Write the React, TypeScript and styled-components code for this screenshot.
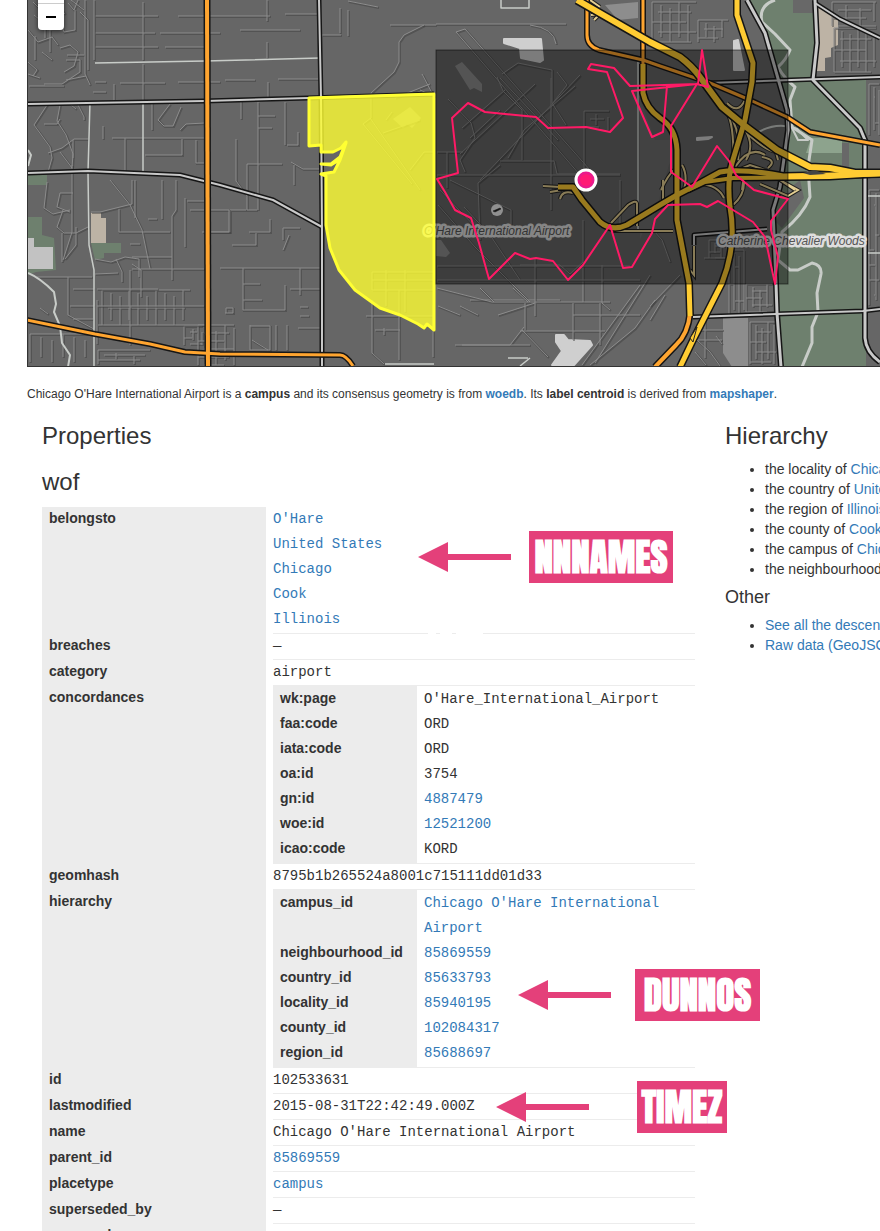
import React from "react";
import styled, { createGlobalStyle } from "styled-components";

const SANS = `"Helvetica Neue", Helvetica, "Liberation Sans", Arial, sans-serif`;

const GlobalStyle = createGlobalStyle`
  * { box-sizing: border-box; }
  body {
    margin: 0;
    background: #fff;
    color: #333;
    font-family: ${SANS};
    font-size: 14px;
    line-height: 20px;
  }
`;

const LINK = "#337ab7";
const PINK = "#e4407a";

const Page = styled.div`
  height: 100vh;
  overflow: hidden;
  padding-left: 27px;
`;

const MapFrame = styled.section`
  position: relative;
  height: 367px;
  overflow: hidden;
  background: #666;
  border: solid #333;
  border-width: 0 0 1px 1px;
`;

const MapDrawing = styled.svg`
  display: block;
  width: 100%;
  height: 100%;
`;

const ZoomControl = styled.div`
  position: absolute;
  top: -23px;
  left: 10px;
  display: flex;
  flex-direction: column;
  border-radius: 4px;
  box-shadow: 0 1px 5px rgba(0, 0, 0, 0.65);
`;

const ZoomButton = styled.button<{ $last?: boolean }>`
  display: flex;
  align-items: center;
  justify-content: center;
  width: 26px;
  height: ${(p) => (p.$last ? 26 : 27)}px;
  padding: 0;
  border: 0;
  border-bottom: ${(p) => (p.$last ? "0" : "1px solid #ccc")};
  border-radius: ${(p) => (p.$last ? "0 0 4px 4px" : "4px 4px 0 0")};
  background: #fff;
`;

const Caption = styled.p`
  margin: 17px 0 19px;
  font-size: 12px;
`;

const Link = styled.a`
  color: ${LINK};
  text-decoration: none;
`;

const Columns = styled.div`
  display: grid;
  grid-template-columns: minmax(0, 1fr) 155px;
  column-gap: 30px;
  padding-left: 15px;
`;

const Title = styled.h3`
  margin: 0 0 20px;
  font-size: 24px;
  font-weight: 400;
  line-height: 26px;
`;

const GroupTitle = styled(Title)`
  margin-bottom: 12px;
`;

const SideTitle = styled(Title)`
  margin-bottom: 10px;
`;

const SideSubtitle = styled.h4`
  margin: 8px 0;
  font-size: 18px;
  font-weight: 400;
  line-height: 20px;
`;

const SideList = styled.ul`
  margin: 0;
  padding-left: 40px;
  white-space: nowrap;
`;

const Records = styled.div`
  position: relative;
`;

const PropertyTable = styled.table`
  width: 100%;
  table-layout: fixed;
  border-collapse: collapse;
  line-height: 25px;
`;

const Key = styled.th<{ $width: number }>`
  width: ${(p) => p.$width}px;
  padding: 0 7px;
  background: #ececec;
  font-family: ${SANS};
  line-height: 23px;
  text-align: left;
  vertical-align: top;
`;

const Value = styled.td`
  padding: 0 0 0 7px;
  vertical-align: top;
  font-family: "Courier New", "Liberation Mono", monospace;
`;

const Ruled = styled.div`
  border-bottom: 1px solid #ececec;
`;

const ValueList = styled.ul`
  margin: 0;
  padding: 0;
  list-style: none;

  &:has(li + li) {
    padding-bottom: 1px;
  }
`;

const NestedFrame = styled.div`
  display: flex;
  padding: 1px 0;
  background: linear-gradient(to right, #ececec 144px, transparent 144px);
`;

const Annotation = styled.div<{ $x: number; $y: number; $gap: number }>`
  position: absolute;
  left: ${(p) => p.$x}px;
  top: ${(p) => p.$y}px;
  display: flex;
  align-items: center;
  gap: ${(p) => p.$gap}px;
`;

const Tag = styled.strong<{ $width: number }>`
  width: ${(p) => p.$width}px;
  height: 52px;
  background: ${PINK};
  color: #fff;
  font-family: Impact, Anton, "Liberation Sans Narrow", "DejaVu Sans Condensed", sans-serif;
  font-size: 37px;
  font-weight: 700;
  line-height: 52px;
  text-align: center;
  white-space: nowrap;
`;

const Smudge = styled.svg`
  position: absolute;
  left: 386px;
  top: 125px;
`;

/* ---------- map data ---------- */

const grid = (x0: number, y0: number, x1: number, y1: number, dx: number, dy: number) => {
  let d = "";
  for (let x = x0, i = 0; x <= x1; x += dx, i++) d += `M${x},${y0 + (i % 3) * 3}V${y1 - (i % 2) * 5}`;
  for (let y = y0, i = 0; y <= y1; y += dy, i++) d += `M${x0 + (i % 2) * 6},${y}H${x1 - (i % 3) * 5}`;
  return d;
};

const STREETS = [
  grid(102, 290, 190, 325, 9, 18),
  grid(30, 334, 88, 362, 11, 40),
  grid(98, 350, 150, 364, 18, 5),
  grid(184, 326, 202, 345, 9, 6),
  grid(198, 325, 234, 365, 9, 8),
  grid(834, 28, 876, 72, 8, 11),
  grid(832, 2, 876, 26, 14, 8),
  grid(869, 84, 879, 135, 5, 13),
  grid(869, 190, 879, 305, 7, 15),
  grid(729, 250, 744, 315, 5, 17),
  grid(746, 284, 772, 312, 7, 7),
  grid(750, 322, 776, 364, 6, 10),
  grid(652, 2, 696, 42, 9, 10),
  grid(698, 20, 728, 42, 8, 9),
  grid(709, 240, 730, 258, 6, 6),
  grid(584, 111, 609, 130, 12, 8),
  "M95,16H158M178,16H270M285,14H320M95,33H155M160,33H220M240,30H300M95,47H158M165,47H204M95,82H106M120,83H165M178,82H220M225,80H255M278,79H318M93,92H106M114,84V101M143,2V60M143,64V100M267,0V21M267,42V58M268,82V97",
  "M340,8V33M348,10V36M322,35H341M348,1L378,7M390,25H436M436,24H566M530,25Q554,28 556,44",
  "M424,25L404,35L399,42V62L394,72L371,93V118M60,105L57,121L66,135L73,154L72,168L60,152M47,105L34,125L50,147L52,158L48,172M44,124H57L60,119M48,153L62,148L74,139H88M73,140V158M103,126V139M125,138V172M112,138H205M145,155H182V139M196,140V163H206M152,103V130M170,104L158,120L164,126H173L181,107M180,130L186,124L205,123M78,105L84,117V120M71,105L76,109",
  "M241,101V119M258,102V210M236,139V181L247,196M258,116H275M258,128H272M285,102V145M298,132V145H287M247,164H282M247,164V210H257M291,162L303,169H321M294,165V185M246,210H230V232H202M270,219V232H249M256,233V245H232M283,240V228H300M289,235L283,250M220,268H320M243,268V310H285V285M300,268V295M243,284H260M243,300H262M290,289H322M300,307H308M300,316H309M298,328H320M250,325V350H270V326H250M252,340L268,350M276,325V350M287,325V350M225,313H233V308H226V313",
  "M47,182L44,208L53,214L70,210M72,165V232L63,260M73,193H60L57,207L70,212M63,210L57,227L64,233H76L88,227M62,233V262M76,227V245L65,259M110,180L130,205L142,230L150,269M132,180V204L100,212H91M119,209V232H170M148,219H157M135,180V218M162,180V219M176,180V210L172,216V280M185,198V247M187,201H204M190,210H229V232H204M130,244H140M132,257H172M132,269H204M95,259L111,262L125,257L139,259V277M116,259L122,272V282M132,264L141,270V297M95,274L118,273M68,277V315L94,329M73,289H94M70,306H94M73,319H93M97,289H158M97,306H204M98,325H205M97,300V344M130,270V345M37,277H92M40,308L48,314",
  "M33,2L40,9L47,5L55,12M34,15L45,24V38M28,30L38,42L52,37L58,45M50,30V52M42,52L52,60M28,62L37,70L33,76M60,48L70,45L78,52L74,66L64,72M66,60H80V72L62,84H44M67,55H84M29,86H64M60,20L64,32L75,30V10M80,12L88,20V70M85,0V74L90,85M94,0V60M35,36V60M28,74L40,78M68,3L74,10L78,0M71,0L84,10M59,7L65,14M66,80L86,76",
  "M437,152H463M437,175H620M447,152V188M448,99L471,123L475,138L460,160L465,172M440,190L480,232M438,205L475,247L530,302M500,165L478,183L480,240M620,174H557L554,161H500M450,180L511,210V230M456,32L580,175M465,29L590,170M456,32L465,29M470,138L500,110M460,154L535,84M480,180L580,75M502,74L518,63L552,70V103L566,125M557,72L567,85L552,104M497,77L503,91L522,110V160M508,158L524,130L575,86M551,78V210M500,78L558,140M462,128L505,90M584,130V180M583,220V302M470,300H560",
  "M437,266H630M437,280H640M464,207L490,235L520,280M535,258V316M520,265H560L570,274L583,262M437,288L492,302M480,288L494,302M513,288L528,302M492,302H610M438,306L460,315M460,306L478,315M498,315L535,303M525,303V330M573,303V340M520,331H605M573,315H640M600,303V345M524,327L510,345H462M522,330L548,357M455,345H530M620,180V232M610,310L602,303V265M640,285L582,365M650,275L595,363M655,300L635,328L590,365",
  "M372,272H434M372,280H434M372,290H434M372,272V290M386,270V306M405,270V312M399,290V360M372,300V353L384,364M366,316H434M384,328V335M375,330H400M433,305V357",
  "M370,118L420,190M363,124L412,184M371,118L363,124M420,120L383,133M395,98L430,84M420,90L434,96M422,74L434,97M386,120L392,112M424,152H434M410,170L424,152",
  "M700,235H760M704,258H725M653,230L662,240L670,262M650,306L680,275M650,320L665,295M697,340L710,352L720,366M695,352L706,365M705,318V358M695,340H722M698,330H723M716,336L722,344",
];

type Road = { d: string; w: number };

const GREY_ROADS: Road[] = [
  { d: "M27,104L205,101L308,98L434,94", w: 2 },
  { d: "M27,173L88,171L180,175L220,185L273,200L322,227", w: 2 },
  { d: "M319,0L321,98L322,230V367", w: 2 },
  { d: "M747,0L765,33L787,110L788,130L780,187L773,210L776,283L777,313L781,367", w: 3 },
  { d: "M815,0L817,43L813,80L860,128L865,140V338Q866,352 880,362", w: 3 },
  { d: "M815,3L840,19L880,38", w: 2 },
  { d: "M708,83L880,77", w: 2 },
  { d: "M693,317L863,311L880,309", w: 2 },
  { d: "M694,245V235L767,229", w: 2 },
];

const THIN_LIGHT = [
  "M95,63L205,61L320,58",
  "M90,102L88,172L89,245L94,270V367",
  "M143,103V172",
  "M501,0V8H529V0",
  "M385,364H434M508,358H528M530,358L520,366",
  "M638,60V232M865,196H880M865,253H880",
];

const RAMPS = [
  "M543,186L560,187M550,192L562,190M560,199Q562,190 573,193",
  "M611,223L628,205Q637,199 637,204M637,203V226M612,231H673",
  "M591,15L600,14L594,20M590,0L600,7",
  "M727,103Q738,115 745,100M724,108Q735,120 733,165M728,112Q742,132 738,160M745,130Q755,145 746,160M745,128L750,136Q765,150 776,152L778,160M735,167Q750,145 765,155M762,157Q778,160 768,168M738,170L750,165L765,170M765,170L795,190M780,180L798,190L788,196L760,184M745,167L742,190M700,184Q718,185 724,198M744,180Q745,195 733,205M682,165Q688,175 684,190M661,190Q668,175 674,170M663,180V200M694,246V275L690,270",
];

const ORANGE_ROADS: Road[] = [
  { d: "M207,0L208,367", w: 4 },
  { d: "M27,320L95,334L150,344L185,352L220,354L340,355Q346,355 353,366", w: 3 },
  { d: "M587,0V35Q587,46 599,50L643,60L660,66L710,83L750,100L787,117L810,132L880,145", w: 3 },
  { d: "M643,0V93", w: 3 },
  { d: "M690,313Q688,334 676,345L655,367", w: 4 },
];

const YELLOW_ROADS: Road[] = [
  { d: "M643,64V93Q646,108 660,118Q676,128 677,150V220L689,283L690,316", w: 5 },
  { d: "M558,187H573L582,200L600,222Q612,232 627,225L660,205L677,195L700,183L720,172Q740,168 783,176L880,174", w: 5 },
  { d: "M688,190L705,182L733,178L830,177L880,174", w: 4 },
  { d: "M737,0V15L753,63L752,82L745,120L732,163Q727,180 730,207Q737,245 722,283L693,340L680,367", w: 5 },
  { d: "M577,0L650,42L680,57Q692,66 700,77L722,107L745,126L777,150L810,167L830,168L855,173L880,173", w: 6 },
];

const AIRPORT_EDGE =
  "309,98 434,94 434,330 427,324 424,328 418,324 400,315 380,308 355,290 339,270 330,248 326,225 326,176 321,174 334,172 340,160 346,143 339,160 331,165 321,164 331,164 340,157 346,142 341,148 333,152 321,152 321,145 309,146";

const SHAPE_EDGE =
  "437,179 458,173 452,118 468,103 485,112 536,117 548,128 586,127 610,132 623,118 607,72 588,69 591,64 614,68 630,86 698,84 702,50 708,87 697,84 632,91 652,137 663,132 667,86 697,84 671,126 671,172 692,187 717,146 729,161 736,175 754,190 788,199 771,221 771,230 778,257 775,284 765,237 753,222 718,201 707,207 700,204 668,205 655,219 652,233 632,267 623,268 610,225 583,265 568,280 553,261 536,258 530,259 515,253 489,279 479,243 471,218 455,210 445,192";

const Roads = ({ roads, color }: { roads: Road[]; color: string }) => (
  <g fill="none" strokeLinejoin="round">
    {roads.map((r) => (
      <path key={r.d} d={r.d} stroke="#161616" strokeWidth={r.w + 3} />
    ))}
    {roads.map((r) => (
      <path key={r.d} d={r.d} stroke={color} strokeWidth={r.w} />
    ))}
  </g>
);

const AirportMap = () => (
  <MapDrawing viewBox="28 0 852 366" preserveAspectRatio="xMinYMin slice" role="img" aria-label="Map of O'Hare">
    <rect x="27" y="0" width="2000" height="367" fill="#666" />
    <g fill="#6e806e">
      <path d="M28,175h19v10h-19zM28,217H42V235L54,238L56,270L36,272L28,275zM91,243H121V253H104V258L95,260z" />
      <path d="M750,0H815L817,43L813,80L866,78V367H781L776,283L771,230L788,130L787,110L765,33z" />
    </g>
    <path d="M811,138H842V153H806z" fill="#8da38d" />
    <path d="M842,143h7v24h-7zM793,0h22v13h-22zM790,188L800,180L804,198L782,228L776,222z" fill="#686868" />
    <path d="M28,238H34V247H53V269H28z" fill="#c2c2c2" />
    <path d="M91,213H101V218H106V243H91zM817,5L838,18V45L831,48V57L825,58V71H815z" fill="#bdb3a5" />
    <path
      d="M504,39H541L543,60L540,62L521,58L520,48L504,43zM556,335H564L568,340L590,341L592,345L574,365H552L562,351L556,342zM734,41L738,40L744,70H734zM697,138L712,137L708,139L697,140z"
      fill="#cfcfcf"
      stroke="#cfcfcf"
      strokeWidth="2"
      strokeLinejoin="round"
    />
    <path d="M455,66L462,62L482,84V92L474,88L470,90zM436,240H441L450,253L446,257L436,256zM723,318H748V367H732L723,353zM605,5L638,2V18L618,20zM393,119L410,107L421,118L412,128L407,124L403,128z" fill="#8d8d8d" />
    <path d="M637,91L655,140H671V160L640,240V60zM640,158H671L650,232H640z" fill="#767676" opacity="0.5" />

    <g fill="none">
      {STREETS.map((d) => (
        <g key={d}>
          <path d={d} stroke="#3c3c3c" strokeWidth="2" opacity="0.45" transform="translate(1 1)" />
          <path d={d} stroke="#8c8c8c" strokeWidth="1" />
        </g>
      ))}
    </g>
    <g fill="none" stroke="#c8ccc8" strokeLinejoin="round">
      <path d="M28,273Q40,278 54,292L56,304L54,312L60,326L62,343L70,355L68,367M28,150L31,155L28,166" strokeWidth="2" />
      <path d="M775,0Q758,6 762,22L775,34L790,50Q786,60 778,67Q784,78 795,87L790,100L792,127L812,140L808,167L810,197Q803,215 782,232L778,260L790,270H798L812,263Q822,265 821,274L817,293L818,312L812,327V343L802,367" strokeWidth="3" />
      <path d="M752,136Q775,120 797,129L808,140H798L792,128" strokeWidth="2" />
      {THIN_LIGHT.map((d) => (
        <path key={d} d={d} strokeWidth="1.5" />
      ))}
    </g>
    <Roads roads={GREY_ROADS} color="#c9c9c9" />
    <g fill="none">
      {RAMPS.map((d) => (
        <g key={d}>
          <path d={d} stroke="#222" strokeWidth="4" />
          <path d={d} stroke="#e5cf92" strokeWidth="2" />
        </g>
      ))}
    </g>
    <Roads roads={ORANGE_ROADS} color="#ffa530" />
    <Roads roads={YELLOW_ROADS} color="#ffcc33" />
    <path d="M803,173L814,170L826,174L810,175z" fill="#444" />
    <path d="M690,338L697,327L693,342z" fill="#ffcc33" stroke="#222" />

    <g
      fontFamily="Helvetica, Liberation Sans, sans-serif"
      fontSize="12"
      fontStyle="italic"
      fill="#555"
      stroke="#dedede"
      strokeWidth="5"
      strokeLinejoin="round"
      paintOrder="stroke"
    >
      <text x="424" y="235">
        O'Hare International Airport
      </text>
      <text x="718" y="245">
        Catherine Chevalier Woods
      </text>
    </g>
    <circle cx="497" cy="210" r="6" fill="#f0f0f0" />
    <path d="M493,211L500,208L501,209L497,211L495,212z" fill="#222" stroke="#222" strokeWidth="0.5" />

    <polygon points={AIRPORT_EDGE} fill="#ffff33" fillOpacity="0.8" stroke="#ffff33" strokeWidth="3" strokeLinejoin="round" />
    <rect x="436" y="50" width="352" height="234" fill="#000" fillOpacity="0.4" stroke="#000" strokeOpacity="0.5" />
    <polygon points={SHAPE_EDGE} fill="none" stroke="#ff1a66" strokeWidth="2" strokeLinejoin="round" />
    <circle cx="586" cy="180" r="10" fill="#ea1a8c" stroke="#fff" strokeWidth="3" />
    <circle cx="586" cy="180" r="6" fill="#ff1a75" />
  </MapDrawing>
);

/* ---------- property records ---------- */

type Cell = { text: string; link?: boolean };
type Entry = { key: string; cells?: Cell[]; nested?: { key: string; cell: Cell }[] };

const t = (text: string): Cell => ({ text });
const a = (text: string): Cell => ({ text, link: true });

const ENTRIES: Entry[] = [
  { key: "belongsto", cells: [a("O'Hare"), a("United States"), a("Chicago"), a("Cook"), a("Illinois")] },
  { key: "breaches", cells: [t("—")] },
  { key: "category", cells: [t("airport")] },
  {
    key: "concordances",
    nested: [
      { key: "wk:page", cell: t("O'Hare_International_Airport") },
      { key: "faa:code", cell: t("ORD") },
      { key: "iata:code", cell: t("ORD") },
      { key: "oa:id", cell: t("3754") },
      { key: "gn:id", cell: a("4887479") },
      { key: "woe:id", cell: a("12521200") },
      { key: "icao:code", cell: t("KORD") },
    ],
  },
  { key: "geomhash", cells: [t("8795b1b265524a8001c715111dd01d33")] },
  {
    key: "hierarchy",
    nested: [
      { key: "campus_id", cell: a("Chicago O'Hare International Airport") },
      { key: "neighbourhood_id", cell: a("85869559") },
      { key: "country_id", cell: a("85633793") },
      { key: "locality_id", cell: a("85940195") },
      { key: "county_id", cell: a("102084317") },
      { key: "region_id", cell: a("85688697") },
    ],
  },
  { key: "id", cells: [t("102533631")] },
  { key: "lastmodified", cells: [t("2015-08-31T22:42:49.000Z")] },
  { key: "name", cells: [t("Chicago O'Hare International Airport")] },
  { key: "parent_id", cells: [a("85869559")] },
  { key: "placetype", cells: [a("campus")] },
  { key: "superseded_by", cells: [t("—")] },
  { key: "supersedes", cells: [t("—")] },
];

const CellText = ({ cell }: { cell: Cell }) => (cell.link ? <Link href="#">{cell.text}</Link> : <>{cell.text}</>);

const EntryRow = ({ entry }: { entry: Entry }) => (
  <tr>
    <Key scope="row" $width={224}>
      {entry.key}
    </Key>
    <Value>
      <Ruled>
        {entry.nested ? (
          <NestedFrame>
            <PropertyTable>
              <tbody>
                {entry.nested.map((n) => (
                  <tr key={n.key}>
                    <Key scope="row" $width={144}>
                      {n.key}
                    </Key>
                    <Value>
                      <CellText cell={n.cell} />
                    </Value>
                  </tr>
                ))}
              </tbody>
            </PropertyTable>
          </NestedFrame>
        ) : (
          <ValueList>
            {entry.cells!.map((c) => (
              <li key={c.text}>
                <CellText cell={c} />
              </li>
            ))}
          </ValueList>
        )}
      </Ruled>
    </Value>
  </tr>
);

const NOTES = [
  { text: "NNNAMES", x: 376, y: 24, gap: 18, width: 144 },
  { text: "DUNNOS", x: 476, y: 462, gap: 24, width: 125 },
  { text: "TIMEZ", x: 454, y: 574, gap: 48, width: 90 },
];

const Arrow = () => (
  <svg width="93" height="30" viewBox="0 0 93 30" aria-hidden="true">
    <path d="M0,15L30,0V12H93V18H30V30z" fill={PINK} />
  </svg>
);

const PLACES = [
  ["the locality of ", "Chicago"],
  ["the country of ", "United States"],
  ["the region of ", "Illinois"],
  ["the county of ", "Cook"],
  ["the campus of ", "Chicago O'Hare"],
  ["the neighbourhood of ", "O'Hare"],
];

export default function App() {
  return (
    <Page>
      <GlobalStyle />
      <MapFrame>
        <AirportMap />
        <ZoomControl>
          <ZoomButton aria-label="Zoom in">
            <svg width="10" height="10" viewBox="0 0 10 10">
              <path d="M0,5H10M5,0V10" stroke="#000" strokeWidth="2" />
            </svg>
          </ZoomButton>
          <ZoomButton $last aria-label="Zoom out">
            <svg width="10" height="2" viewBox="0 0 10 2">
              <path d="M0,1H10" stroke="#000" strokeWidth="2" />
            </svg>
          </ZoomButton>
        </ZoomControl>
      </MapFrame>
      <Caption>
        Chicago O'Hare International Airport is a <strong>campus</strong> and its consensus geometry is from{" "}
        <strong>
          <Link href="#">woedb</Link>
        </strong>
        . Its <strong>label centroid</strong> is derived from{" "}
        <strong>
          <Link href="#">mapshaper</Link>
        </strong>
        .
      </Caption>
      <Columns>
        <main>
          <Title>Properties</Title>
          <GroupTitle>wof</GroupTitle>
          <Records>
            <PropertyTable>
              <tbody>
                {ENTRIES.map((e) => (
                  <EntryRow key={e.key} entry={e} />
                ))}
              </tbody>
            </PropertyTable>
            <Smudge width="56" height="4" viewBox="0 0 56 4" aria-hidden="true">
              <path d="M0,0H8V4H0zM12,0H24V4H12zM28,0H55V4H28z" fill="#fff" />
            </Smudge>
            {NOTES.map((n) => (
              <Annotation key={n.text} $x={n.x} $y={n.y} $gap={n.gap}>
                <Arrow />
                <Tag $width={n.width}>{n.text}</Tag>
              </Annotation>
            ))}
          </Records>
        </main>
        <aside>
          <SideTitle>Hierarchy</SideTitle>
          <SideList>
            {PLACES.map(([lead, place]) => (
              <li key={lead}>
                {lead}
                <Link href="#">{place}</Link>
              </li>
            ))}
          </SideList>
          <SideSubtitle>Other</SideSubtitle>
          <SideList>
            <li>
              <Link href="#">See all the descendants</Link>
            </li>
            <li>
              <Link href="#">Raw data (GeoJSON)</Link>
            </li>
          </SideList>
        </aside>
      </Columns>
    </Page>
  );
}
